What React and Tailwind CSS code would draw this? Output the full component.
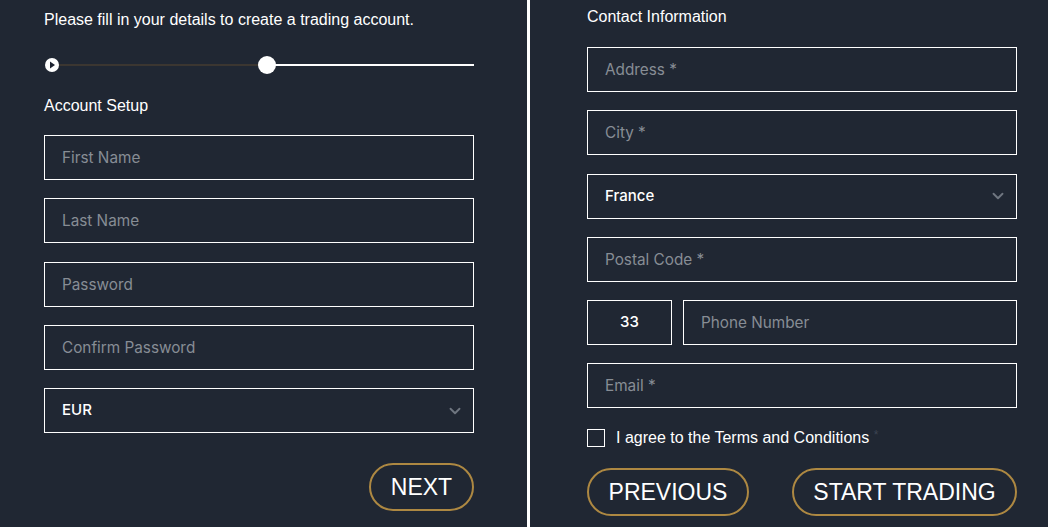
import { ChevronDown } from "lucide-react";

const FIELD = "h-[45px] w-full border border-white bg-transparent px-[17px] text-[15.3px] text-white placeholder:text-[#878d95] outline-none";
const PILL = "rounded-full border-2 border-[#ad8842] text-white text-[23px] leading-none font-['Liberation_Sans',Arial,sans-serif] flex items-center justify-center";

function TextField({ placeholder, className = "" }) {
  return <input className={`${FIELD} ${className}`} placeholder={placeholder} />;
}

function SelectBox({ value }) {
  return (
    <div className="h-[45px] w-full border border-white flex items-center justify-between pl-[17px] pr-[9px]">
      <span className="text-[15px] font-medium text-white">{value}</span>
      <ChevronDown className="w-[18px] h-[18px] text-[#6f7680]" strokeWidth={2.5} />
    </div>
  );
}

function Stepper() {
  return (
    <div className="relative h-[20px] w-[430px] flex items-center">
      <div className="h-[2px] w-[214px] ml-[14px] bg-[#3b3631]" />
      <div className="h-[2px] flex-1 bg-white" />
      <div className="absolute left-[1px] top-[3px] w-[14px] h-[14px] rounded-full bg-white flex items-center justify-center">
        <svg width="8" height="8" viewBox="0 0 8 8">
          <path d="M2 0.5 L7 4 L2 7.5 Z" fill="#1d2330" />
        </svg>
      </div>
      <div className="absolute left-[214px] top-[1px] w-[18px] h-[18px] rounded-full bg-white" />
    </div>
  );
}

export default function App() {
  return (
    <div className="w-[1048px] h-[527px] bg-[#202733] flex overflow-hidden font-['Inter',sans-serif]">
      {/* Step 1 */}
      <div className="w-[527px] shrink-0 pl-[44px] flex flex-col">
        <p className="mt-[10px] text-[16px] leading-[20px] text-white font-['Liberation_Sans',Arial,sans-serif]">
          Please fill in your details to create a trading account.
        </p>
        <div className="mt-[25px]">
          <Stepper />
        </div>
        <p className="mt-[21px] text-[16px] leading-[20px] text-white font-['Liberation_Sans',Arial,sans-serif]">
          Account Setup
        </p>
        <div className="mt-[19px] w-[430px] flex flex-col gap-[18.25px]">
          <TextField placeholder="First Name" />
          <TextField placeholder="Last Name" />
          <TextField placeholder="Password" />
          <TextField placeholder="Confirm Password" />
          <SelectBox value="EUR" />
        </div>
        <div className="w-[430px] flex justify-end mt-[30px]">
          <button className={`${PILL} w-[105px] h-[48px]`}>NEXT</button>
        </div>
      </div>

      <div className="w-[3px] shrink-0 bg-white" />

      {/* Step 2 */}
      <div className="flex-1 pl-[57px] flex flex-col">
        <p className="mt-[7px] text-[16px] leading-[20px] text-white font-['Liberation_Sans',Arial,sans-serif]">
          Contact Information
        </p>
        <div className="mt-[20px] w-[430px] flex flex-col gap-[18.25px]">
          <TextField placeholder="Address *" />
          <TextField placeholder="City *" />
          <SelectBox value="France" />
          <TextField placeholder="Postal Code *" />
          <div className="flex gap-[11px]">
            <div className="w-[85px] h-[45px] shrink-0 border border-white flex items-center justify-center text-[15px] font-medium text-white">
              33
            </div>
            <TextField placeholder="Phone Number" />
          </div>
          <TextField placeholder="Email *" />
        </div>
        <label className="mt-[18px] flex items-center gap-[11px] font-['Liberation_Sans',Arial,sans-serif]">
          <span className="w-[18px] h-[18px] border border-white" />
          <span className="text-[16px] text-white">
            I agree to the Terms and Conditions <span className="text-[#3c4452] text-[12px] align-top">*</span>
          </span>
        </label>
        <div className="mt-[18px] w-[430px] flex justify-between">
          <button className={`${PILL} w-[162px] h-[48px]`}>PREVIOUS</button>
          <button className={`${PILL} w-[225px] h-[48px]`}>START TRADING</button>
        </div>
      </div>
    </div>
  );
}
